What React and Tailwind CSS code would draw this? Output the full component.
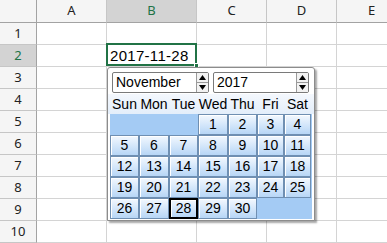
import React from 'react'

const cols = ['A', 'B', 'C', 'D', 'E']
const rows = [1, 2, 3, 4, 5, 6, 7, 8, 9, 10]
const weekdays = ['Sun', 'Mon', 'Tue', 'Wed', 'Thu', 'Fri', 'Sat']

// November 2017 starts on Wednesday
const days = [
  null, null, null, 1, 2, 3, 4,
  5, 6, 7, 8, 9, 10, 11,
  12, 13, 14, 15, 16, 17, 18,
  19, 20, 21, 22, 23, 24, 25,
  26, 27, 28, 29, 30, null, null,
]

function Spinner() {
  return (
    <div className="flex w-[12px] flex-col border-l border-[#9a9a9a] bg-[#f2f2f2]">
      <div className="flex h-1/2 items-center justify-center border-b border-[#9a9a9a]">
        <svg width="7" height="5" viewBox="0 0 7 5"><path d="M3.5 0 L7 5 L0 5 Z" fill="#000" /></svg>
      </div>
      <div className="flex h-1/2 items-center justify-center">
        <svg width="7" height="5" viewBox="0 0 7 5"><path d="M0 0 L7 0 L3.5 5 Z" fill="#000" /></svg>
      </div>
    </div>
  )
}

function DatePopup() {
  return (
    <div className="absolute left-[107px] top-[67px] flex h-[154px] w-[208px] flex-col rounded-t-[3px] border border-[#8c8c8c] bg-white shadow-[2px_2px_2px_rgba(0,0,0,0.35)]">
      {/* month / year pickers */}
      <div className="flex gap-[4px] px-[4px] pt-[4px]">
        <div className="flex h-[21px] w-[97px] rounded-[2px] border border-[#7a7a7a] bg-white">
          <div className="flex-1 pl-[3px] text-[14px] leading-[19px] text-black">November</div>
          <Spinner />
        </div>
        <div className="flex h-[21px] w-[96px] rounded-[2px] border border-[#7a7a7a] bg-white">
          <div className="flex-1 pl-[3px] text-[14px] leading-[19px] text-black">2017</div>
          <Spinner />
        </div>
      </div>

      {/* weekday labels */}
      <div className="mt-[1px] bg-gradient-to-b from-[#f4f8fd] to-[#e3eefa] px-[2px]">
        <div className="grid h-[20px] grid-cols-[29px_30px_29px_30px_29px_27px_27px] items-center text-center text-[14px] text-black">
          {weekdays.map((w) => (
            <div key={w}>{w}</div>
          ))}
        </div>
      </div>

      {/* days */}
      <div className="px-[2px]">
        <div className="grid grid-cols-[29px_30px_29px_30px_29px_27px_27px] grid-rows-[repeat(5,21px)] bg-[#a4cbf4]">
          {days.map((d, i) =>
            d === null ? (
              <div key={i} />
            ) : (
              <div
                key={i}
                className={
                  'flex items-center justify-center bg-gradient-to-b from-[#f3f8fe] to-[#b7d6f6] text-[14px] text-black shadow-[inset_1px_1px_0_#ffffff] ' +
                  (d === 28 ? 'border-2 border-black' : 'border border-[#6f8fb2]')
                }
              >
                {d}
              </div>
            )
          )}
        </div>
      </div>
    </div>
  )
}

export default function App() {
  return (
    <div className="relative h-[243px] w-[387px] overflow-hidden bg-white" style={{ fontFamily: '"Liberation Sans", Arial, sans-serif' }}>
      <div className="grid grid-cols-[37px_70px_90px_70px_70px_70px] grid-rows-[23px_repeat(10,22px)]">
        {/* header row */}
        <div className="border-b border-r border-[#a3a3a3] bg-[#f5f5f5]" />
        {cols.map((c) => (
          <div
            key={c}
            className={
              'flex items-center justify-center border-b border-r border-b-[#a3a3a3] border-r-[#c6c6c6] text-[13px] ' +
              (c === 'B' ? 'bg-[#d3d3d3] text-[#217346]' : 'bg-[#f5f5f5] text-[#222]')
            }
            style={{ fontFamily: '"Noto Sans", sans-serif' }}
          >
            {c}
          </div>
        ))}

        {/* body rows */}
        {rows.map((r) => (
          <React.Fragment key={r}>
            <div
              className={
                'flex items-center justify-center border-b border-r border-b-[#c6c6c6] border-r-[#a3a3a3] text-[13px] ' +
                (r === 2 ? 'bg-[#d3d3d3] text-[#217346]' : 'bg-[#f5f5f5] text-[#222]')
              }
              style={{ fontFamily: '"Noto Sans", sans-serif' }}
            >
              {r}
            </div>
            {cols.map((c) => (
              <div key={c} className="border-b border-r border-[#d4d4d4] bg-white">
                {r === 2 && c === 'B' ? (
                  <div className="pl-[3px] text-[15px] leading-[21px] tracking-[0.3px] text-black">2017-11-28</div>
                ) : null}
              </div>
            ))}
          </React.Fragment>
        ))}
      </div>

      {/* selected cell outline */}
      <div className="pointer-events-none absolute left-[106px] top-[43px] h-[23px] w-[91px] border-2 border-[#217346]" />
      <div className="absolute left-[194px] top-[63px] h-[5px] w-[5px] border border-white bg-[#217346]" />

      <DatePopup />
    </div>
  )
}
